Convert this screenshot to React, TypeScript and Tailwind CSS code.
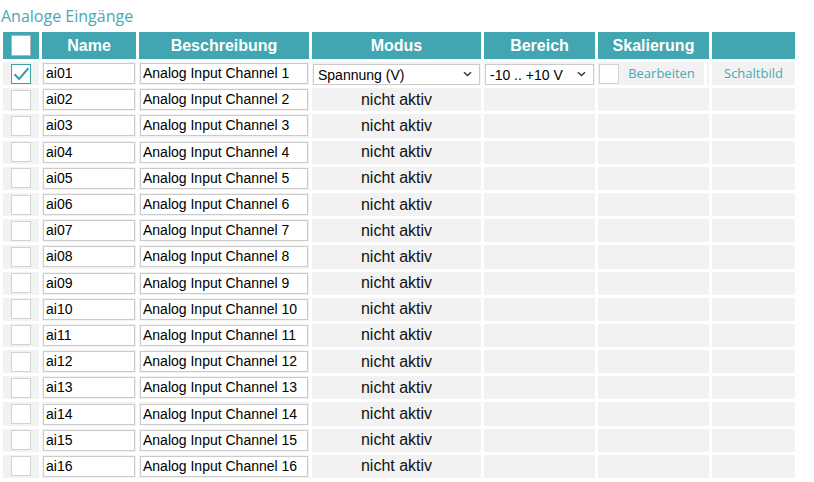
import React from "react";

const teal = "bg-[#41a6b1]";

const Chevron: React.FC = () => (
  <svg width="9" height="6" viewBox="0 0 9 6" className="pointer-events-none absolute right-[8px] top-1/2 -translate-y-1/2">
    <path d="M1 1.2l3.5 3.3L8 1.2" fill="none" stroke="#333" strokeWidth="1.4" />
  </svg>
);

const Box: React.FC<{ checked?: boolean; header?: boolean }> = ({ checked, header }) => (
  <div
    className={
      "h-[20px] w-[20px] bg-white border " +
      (checked ? "border-[#3aa0ae]" : header ? "border-[#b3b3b3] h-[21px]" : "border-[#d2d2d2]")
    }
  >
    {checked && (
      <svg width="18" height="18" viewBox="0 0 18 18">
        <path d="M2.5 9.2l4.6 4.8L16.4 3.3" fill="none" stroke="#3aa0ae" strokeWidth="2.1" />
      </svg>
    )}
  </div>
);

const TextInput: React.FC<{ value: string }> = ({ value }) => (
  <input
    readOnly
    value={value}
    className="h-[21px] w-full border border-[#cbcbcb] bg-white px-[2px] text-[14px] text-black outline-none font-['Liberation_Sans',Arial,sans-serif]"
  />
);

const Select: React.FC<{ value: string }> = ({ value }) => (
  <div className="relative h-[21px] w-full">
    <select
      value={value}
      onChange={() => {}}
      className="h-full w-full appearance-none border border-[#cbcbcb] bg-white pl-[4px] text-[14px] text-black outline-none font-['Liberation_Sans',Arial,sans-serif]"
    >
      <option>{value}</option>
    </select>
    <Chevron />
  </div>
);

export default function App() {
  const rows = Array.from({ length: 16 }, (_, i) => i + 1);
  const head = ["Name", "Beschreibung", "Modus", "Bereich", "Skalierung", ""];

  return (
    <div className="min-h-screen bg-white font-['Liberation_Sans',Arial,sans-serif]">
      <div className="pl-px pt-[6px] pb-[3px] text-[16px] leading-[20px] text-[#47a9b4] font-['Open_Sans',sans-serif]">
        Analoge Eingänge
      </div>
      <div className="grid w-max grid-cols-[36px_94px_170px_169px_111px_111px_83px] grid-rows-[27px_repeat(16,23.2px)] gap-[3px] px-[3px] pt-[3px]">
        <div className={`${teal} flex items-center justify-center`}>
          <Box header />
        </div>
        {head.map((h, i) => (
          <div key={i} className={`${teal} flex items-center justify-center text-[16px] font-bold text-white`}>
            {h}
          </div>
        ))}

        {rows.map((n) => {
          const id = "ai" + String(n).padStart(2, "0");
          const active = n === 1;
          return (
            <React.Fragment key={n}>
              <div className="flex items-center justify-center bg-[#f2f2f2]">
                <Box checked={active} />
              </div>
              <div className="flex items-center bg-[#f2f2f2] px-px">
                <TextInput value={id} />
              </div>
              <div className="flex items-center bg-[#f2f2f2] px-px">
                <TextInput value={`Analog Input Channel ${n}`} />
              </div>
              <div className="flex items-center justify-center bg-[#f2f2f2] px-px text-[16px] text-[#111]">
                {active ? <Select value="Spannung (V)" /> : "nicht aktiv"}
              </div>
              <div className="flex items-center bg-[#f2f2f2] px-px">
                {active && <Select value="-10 .. +10 V" />}
              </div>
              {active ? (
                <div className="flex bg-white">
                  <div className="flex flex-1 items-center bg-[#f2f2f2] pl-px">
                    <Box />
                    <button className="flex-1 text-[13px] text-[#4aa9b4] font-['Open_Sans',sans-serif]">
                      Bearbeiten
                    </button>
                  </div>
                  <div className="ml-[3px] w-[2px] bg-[#f2f2f2]" />
                </div>
              ) : (
                <div className="bg-[#f2f2f2]" />
              )}
              <div className="flex items-center justify-center bg-[#f2f2f2]">
                {active && (
                  <button className="text-[13px] text-[#4aa9b4] font-['Open_Sans',sans-serif]">Schaltbild</button>
                )}
              </div>
            </React.Fragment>
          );
        })}
      </div>
    </div>
  );
}
